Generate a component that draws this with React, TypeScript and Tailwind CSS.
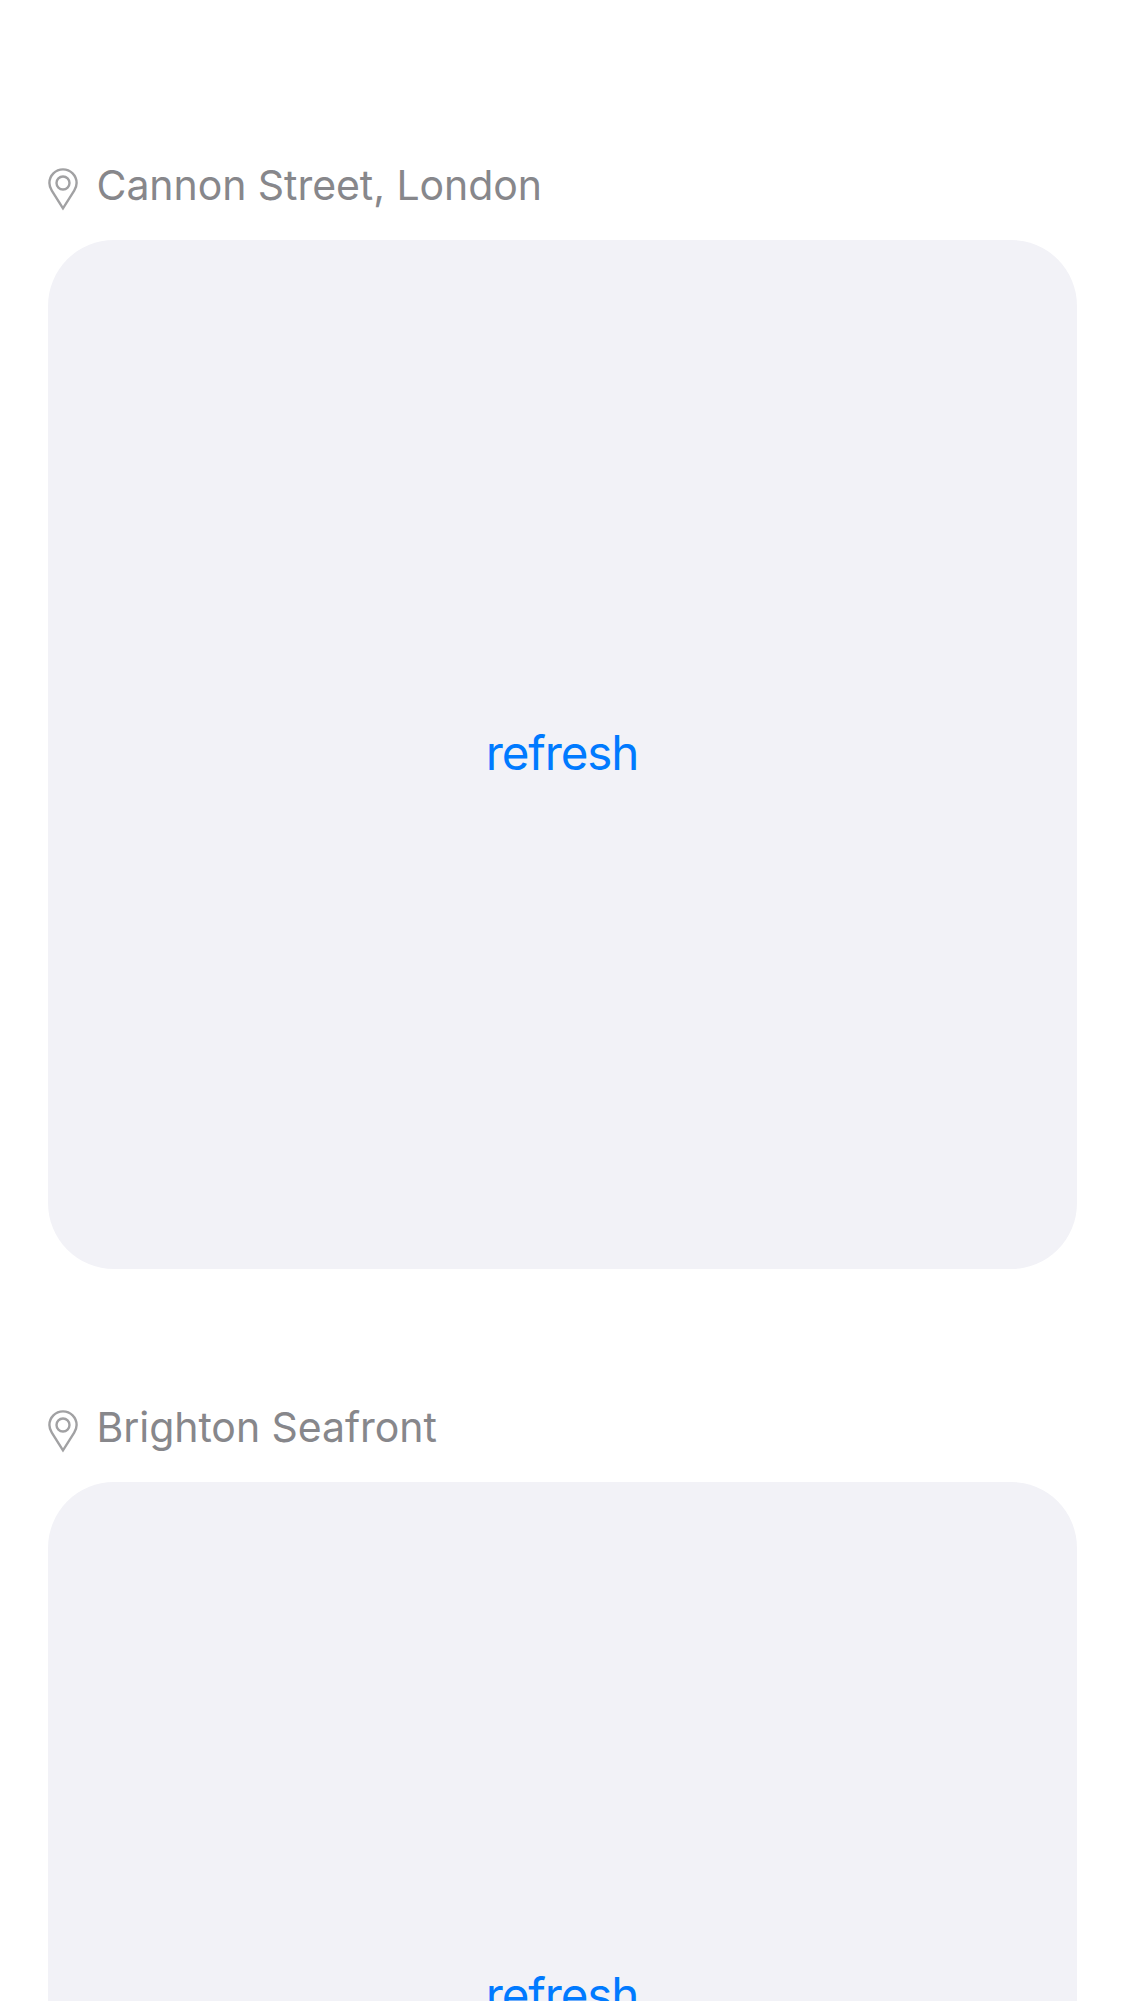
function Pin() {
  return (
    <svg width="30" height="43" viewBox="0 0 30 43" fill="none" stroke="#a1a1a3" strokeWidth="2.4" strokeLinejoin="miter" className="mt-[5.5px] shrink-0">
      <path d="M15 40.3L3.8 22.6C2.2 20.1 1.4 17.9 1.4 15A13.6 13.6 0 0 1 28.6 15C28.6 17.9 27.8 20.1 26.2 22.6Z" />
      <circle cx="15" cy="15" r="6.5" />
    </svg>
  );
}

function LocationCard({ name }: { name: string }) {
  return (
    <section>
      <div className="mb-[28px] flex h-[50px] items-start gap-[18.5px]">
        <Pin />
        <h2 className="-mt-0.5 text-[41px] leading-[50px] font-normal tracking-[-0.06px] text-[#87878b] whitespace-nowrap">{name}</h2>
      </div>
      <div className="flex h-[1029px] items-center justify-center rounded-[66px] bg-[#f2f2f7]">
        <button className="pb-1 pr-px text-[47.5px] leading-[58px] tracking-[-1.1px] text-[#007aff]">refresh</button>
      </div>
    </section>
  );
}

export default function App() {
  return (
    <main className="flex h-[2001px] flex-col gap-[135px] overflow-hidden bg-white px-12 pt-[162px] font-['Inter',sans-serif]">
      <LocationCard name="Cannon Street, London" />
      <LocationCard name="Brighton Seafront" />
    </main>
  );
}
